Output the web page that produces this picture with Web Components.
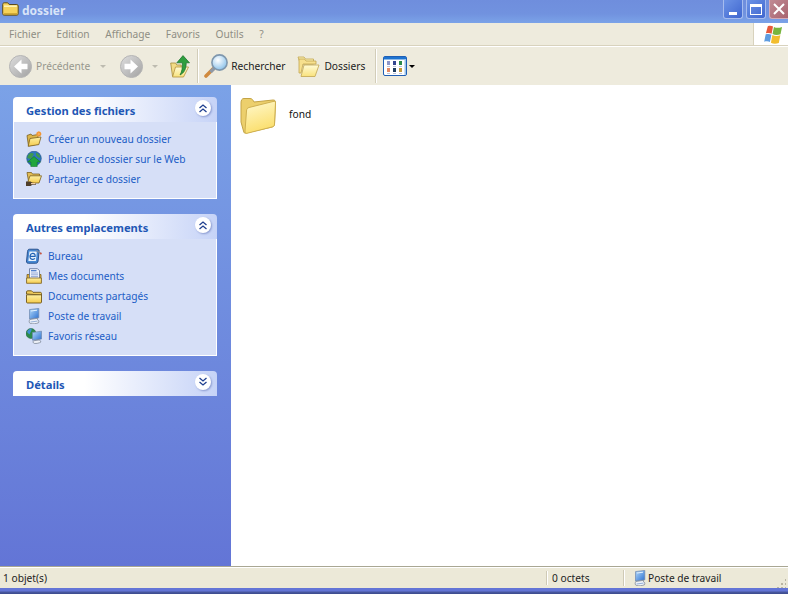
<!DOCTYPE html>
<html lang="fr">
<head>
<meta charset="utf-8">
<title>dossier</title>
<style>
  html,body{margin:0;height:100%;overflow:hidden}
  body{font:10.2px "Noto Sans","DejaVu Sans",sans-serif}
</style>
</head>
<body>
<xp-window>
  <xp-titlebar slot="title" label="dossier"></xp-titlebar>
  <xp-menubar slot="menu"></xp-menubar>
  <xp-toolbar slot="tools"></xp-toolbar>
  <xp-taskpane slot="side">
    <xp-taskbox label="Gestion des fichiers">
      <xp-tasklink icon="newfolder">Créer un nouveau dossier</xp-tasklink>
      <xp-tasklink icon="publish">Publier ce dossier sur le Web</xp-tasklink>
      <xp-tasklink icon="share">Partager ce dossier</xp-tasklink>
    </xp-taskbox>
    <xp-taskbox label="Autres emplacements">
      <xp-tasklink icon="desktop">Bureau</xp-tasklink>
      <xp-tasklink icon="mydocs">Mes documents</xp-tasklink>
      <xp-tasklink icon="shared">Documents partagés</xp-tasklink>
      <xp-tasklink icon="computer">Poste de travail</xp-tasklink>
      <xp-tasklink icon="network">Favoris réseau</xp-tasklink>
    </xp-taskbox>
    <xp-taskbox label="Détails" collapsed></xp-taskbox>
  </xp-taskpane>
  <xp-filelist slot="main"><xp-file label="fond"></xp-file></xp-filelist>
  <xp-statusbar slot="status"></xp-statusbar>
</xp-window>

<script>
// tous les dessins au meme endroit, xp-icon les pose dans son shadow root
const GRAD = {
  fold: '<linearGradient id="fold" x1="0" y1="0" x2="0" y2="1"><stop offset="0" stop-color="#fdf0a4"/><stop offset="1" stop-color="#f5cb4c"/></linearGradient>',
  pale: '<linearGradient id="pale" x1="0" y1="0" x2="0" y2="1"><stop offset="0" stop-color="#fffbd6"/><stop offset="1" stop-color="#f9e27c"/></linearGradient>',
  big: '<linearGradient id="big" x1="0" y1="0" x2=".3" y2="1"><stop offset="0" stop-color="#fff9cf"/><stop offset="1" stop-color="#fbdf6e"/></linearGradient>',
  back: '<linearGradient id="back" x1="0" y1="0" x2="1" y2="1"><stop offset="0" stop-color="#dedede"/><stop offset="1" stop-color="#a2a2a2"/></linearGradient>',
  lens: '<radialGradient id="lens" cx=".4" cy=".35" r=".7"><stop offset="0" stop-color="#ffffff"/><stop offset="1" stop-color="#86bfe9"/></radialGradient>',
  mon: '<linearGradient id="mon" x1="0" y1="0" x2="1" y2="1"><stop offset="0" stop-color="#b4dafa"/><stop offset="1" stop-color="#2a6fd0"/></linearGradient>'
};
const ICONS = {
  back:`<svg viewBox="0 0 23 23">${GRAD.back}<circle cx="11.500" cy="11.500" r="11" fill="url(#back)" stroke="#b4b4b4"/><path d="M12.500 4.500 5 11.500l7.500 7v-4.300h6V8.800h-6z" fill="#fff"/></svg>`,
  forward:`<svg viewBox="0 0 23 23">${GRAD.back}<circle cx="11.500" cy="11.500" r="11" fill="url(#back)" stroke="#b4b4b4"/><path d="M10.500 4.500l7.500 7-7.500 7v-4.300h-6V8.800h6z" fill="#fff"/></svg>`,
  up:`<svg viewBox="0 0 20 23">${GRAD.pale}<path d="M.7 8h5l1 2h4.500v11H2.500z" fill="#f3dc86" stroke="#a58a3a" stroke-width=".8"/><path d="M2.500 22 5.500 12h13l-5 10z" fill="url(#pale)" stroke="#b1913c" stroke-width=".8"/><path d="M13 .6l6.500 7.200h-3.300c0 6-1.800 10-6.200 12.200 2-3.500 2.500-7 2.400-12.200H6.800z" fill="#2f9e3f" stroke="#17702a" stroke-width=".7"/></svg>`,
  search:`<svg viewBox="0 0 24 24">${GRAD.lens}<path d="M9 15 2 22" stroke="#d08a3e" stroke-width="3.600" stroke-linecap="round"/><path d="M10 14.500 6.500 18" stroke="#8f99a6" stroke-width="3.400"/><circle cx="15.500" cy="8.500" r="7.600" fill="url(#lens)" stroke="#7f97ad" stroke-width="1.600"/></svg>`,
  folders:`<svg viewBox="0 0 23 21">${GRAD.pale}<path d="M1 1h6l1.500 2h8v5H3.500z" fill="#fbeeae" stroke="#c2a650" stroke-width=".8"/><path d="M2 3v14h2l2-9h13V5H9L7.500 3z" fill="#f7e08e" stroke="#c2a650" stroke-width=".8"/><path d="M4 20.500 7 9h15l-4 11.500z" fill="url(#pale)" stroke="#c2a650" stroke-width=".8"/></svg>`,
  views:`<svg viewBox="0 0 24 20"><rect x=".5" y=".5" width="23" height="19" rx="1.500" fill="#fff" stroke="#1f5fb5"/><rect x="1" y="1" width="22" height="2.500" fill="#1e74d0"/><rect x="21.500" y="3" width="1.500" height="16" fill="#9cc4ea"/><rect x="4" y="5" width="3" height="4" fill="#8d97c9"/><rect x="10" y="5" width="3" height="4" fill="#33458f"/><rect x="16" y="5" width="3" height="4" fill="#2c8a4a"/><rect x="4" y="12" width="3" height="4" fill="#e48a63"/><rect x="10" y="12" width="3" height="4" fill="#1f3d5e"/><rect x="16" y="12" width="3" height="4" fill="#c39a3d"/><rect x="4" y="10" width="3" height="1" fill="#bcc3da"/><rect x="10" y="10" width="3" height="1" fill="#bcc3da"/><rect x="16" y="10" width="3" height="1" fill="#bcc3da"/><rect x="4" y="17" width="3" height="1" fill="#bcc3da"/><rect x="10" y="17" width="3" height="1" fill="#bcc3da"/><rect x="16" y="17" width="3" height="1" fill="#bcc3da"/></svg>`,
  logo:`<svg viewBox="0 0 22 20"><path d="M5 1.200c2-.8 4-.5 5.500.3L9 9.300C7.500 8.300 5.500 8 3 8.800z" fill="#e8593a"/><path d="M11.500 2c2.500 1.200 5 1.200 8.500 0L18.400 9.800c-3 1.100-6 1-8.400-.2z" fill="#78b53e"/><path d="M2.800 9.800c2.500-.7 4.500-.5 6 .5L7.200 18c-1.500-1-3.500-1.100-6-.4z" fill="#5e9ce0"/><path d="M9.800 10.600c2.500 1.200 5.300 1.300 8.400.2L16.600 19c-3 1.100-6 1-8.300-.3z" fill="#f2bd2e"/></svg>`,
  titlefolder:`<svg viewBox="0 0 17 14"><path d="M.7 2.500c0-1 .6-1.700 1.500-1.700h3.500l1.500 1.700h7.600c.8 0 1.400.6 1.400 1.400v7.800c0 .8-.6 1.500-1.400 1.500H2.200c-.9 0-1.500-.7-1.500-1.500z" fill="#f6d25a" stroke="#5b4a1e"/><path d="M2 4.200h12.800" stroke="#fff6c2" stroke-width="1.400"/><path d="M2 12h13" stroke="#b98f22" stroke-width="1.200"/></svg>`,
  folderbig:`<svg viewBox="0 0 37 37">${GRAD.big}<path d="M1 6C1 3 2 1.500 4 1.500h6c2 0 3 1.500 4 3.500L33 3c2 0 2.500 1 2.500 2l-1 22c0 2-1.500 2.500-2.500 3L6 36c-1.500.5-2 0-2.500-2L1 25z" fill="#eccf6c" stroke="#c3a345"/><path d="M6.500 14c0-2 1-3 2.500-3.500l24-6c2-.5 2.500 0 2.500 1.500l-1 21c0 2-1 2.700-2.500 3L7 36.300c-1.500.3-2-.3-2-2.300z" fill="url(#big)" stroke="#cfb050"/></svg>`,
  newfolder:`<svg viewBox="0 0 16 16">${GRAD.fold}<path d="M1 4.500 5 3l1 1.500L12 3.500 12.500 13 2.500 15z" fill="#dcb548" stroke="#7c6120" stroke-width=".8"/><path d="M2.200 15.300 4 7.500 15 6 12.800 13.600z" fill="url(#fold)" stroke="#7c6120" stroke-width=".8"/><circle cx="12.800" cy="3" r="2.400" fill="#ee7f22"/><path d="M12.800 0v6M9.800 3h6M10.800 1l4 4M14.800 1l-4 4" stroke="#f7b65a" stroke-width=".7"/></svg>`,
  publish:`<svg viewBox="0 0 16 16"><circle cx="8" cy="7.500" r="7.300" fill="#2f76c0" stroke="#1e4d84" stroke-width=".6"/><path d="M3 3c2-1.500 4-1 5 0-1 1.500-2 2-1.500 3.500C5 8 3 8 1.200 7 1.500 5 2.300 4 3 3zM10 1.500c2 .5 4 2.500 4.500 5-1.500.5-3.500-.5-4.500-2.500z" fill="#3f9a4e"/><path d="M8 5.500l6.500 5.500h-3.300v4.500H4.800V11H1.500z" fill="#22a63c" stroke="#0f6b20" stroke-width=".5"/></svg>`,
  share:`<svg viewBox="0 0 16 16">${GRAD.fold}<path d="M1 1.500h4.500l1 1.500H13.500v7H2.500z" fill="#e3bd54" stroke="#7c6120" stroke-width=".8"/><path d="M1.500 12 4 4.800h11.500L13 12z" fill="url(#fold)" stroke="#7c6120" stroke-width=".8"/><path d="M0 10.500h4.500l2 1.300 3.500.5v1.500H6.500l-2 1.200H0z" fill="#4f3f2c"/><path d="M5 12h4.500v1.200H5z" fill="#f3cfa6"/></svg>`,
  desktop:`<svg viewBox="0 0 16 16"><path d="M3.500 1.200h7.500c1.500 0 2.300.8 2.100 2.300l-1 9.500c-.2 1.500-1 2.300-2.500 2.300H2.500C1 15.300.3 14.500.5 13l1-9.500c.1-1.500 .8-2.300 2-2.300z" fill="#4788d2" stroke="#173f7c" stroke-width=".8"/><path d="M3.400 3.600h7.400L9.900 13H2.400z" fill="#e8f2fc"/><path d="M4.300 8.300h4.800c.3-2-1-3.100-2.500-2.900C5 5.600 4 7 4 8.800c0 1.800 1.300 2.800 3 2.500.9-.1 1.500-.5 2-1" fill="none" stroke="#1f62b4" stroke-width="1.200"/><path d="M10 2.500l5 3" stroke="#7f8a9c" stroke-width="1.200"/><circle cx="14.800" cy="5.500" r="1" fill="#c95440"/></svg>`,
  mydocs:`<svg viewBox="0 0 16 16">${GRAD.fold}<path d="M1 6.500h14v8H1z" fill="#dcae3c" stroke="#7c6120" stroke-width=".8"/><path d="M3.500 .7h8l2 2V11h-10z" fill="#eef3fc" stroke="#5c6f95" stroke-width=".8"/><path d="M5 2.700h5.500" stroke="#3f74c8" stroke-width="1.200"/><path d="M5 5h7M5 6.800h7M5 8.600h7" stroke="#7d97cf" stroke-width=".8"/><path d="M.6 10h14.800v5.300H.6z" fill="url(#fold)" stroke="#7c6120" stroke-width=".8"/></svg>`,
  shared:`<svg viewBox="0 0 16 16">${GRAD.fold}<path d="M.5 6V4c0-.7.5-1.200 1.200-1.200h3.800L7 4.300h7.300c.7 0 1.200.5 1.200 1.200V7z" fill="#eeca5c" stroke="#6e5518" stroke-width=".9"/><path d="M.5 6.800h15v7.200c0 .6-.4 1-1 1h-13c-.6 0-1-.4-1-1z" fill="url(#fold)" stroke="#6e5518" stroke-width=".9"/></svg>`,
  computer:`<svg viewBox="0 0 16 16">${GRAD.mon}<path d="M3.500 1.600 12.800.4v9.400L3.500 11z" fill="url(#mon)" stroke="#6d87ad" stroke-width=".7"/><path d="M5 3 11 2.200" stroke="#e2f1ff" stroke-width="1"/><path d="M3.800 11.500l7.700-1.200v1.400c1.200.5 1.700 1.700 1 3-2.500 1.200-6 1.500-8.300.7-1.300-.6-1.300-2.400-.4-3.900z" fill="#eef1f7" stroke="#6f7a8c" stroke-width=".7"/><path d="M4.500 14l7-.9" stroke="#7f9fd0" stroke-width=".8"/></svg>`,
  network:`<svg viewBox="0 0 16 16">${GRAD.mon}<circle cx="5" cy="5.500" r="5" fill="#2c8a4a" stroke="#1c5f3a" stroke-width=".5"/><path d="M1 4c1-2 3-3.500 4.500-3.500.5 2-1 3.500-2 6z" fill="#3f8fd6"/><path d="M6.500 4.500 15.500 3.200v7.800l-9 1.200z" fill="url(#mon)" stroke="#6d87ad" stroke-width=".7"/><path d="M7.500 12.800l6-.9 1.500 2c-1.800 1.300-4.500 1.800-6.800 1.500-1.200-.4-1.400-1.700-.7-2.600z" fill="#eef1f7" stroke="#6f7a8c" stroke-width=".7"/></svg>`
};

class XpIcon extends HTMLElement{
  connectedCallback(){
    const w=this.getAttribute('w')||16, h=this.getAttribute('h')||w;
    this.attachShadow({mode:'open'}).innerHTML=`
      <style>:host{display:block;flex:none;width:${w}px;height:${h}px} svg{display:block;width:100%;height:100%}</style>
      ${ICONS[this.getAttribute('name')]||''}`;
  }
}
customElements.define('xp-icon',XpIcon);

class XpWindow extends HTMLElement{
  constructor(){
    super();
    this.attachShadow({mode:'open'}).innerHTML=`
      <style>
        :host{display:flex;flex-direction:column;width:788px;height:594px;background:#ece9d8;color:#000}
        .body{flex:1;min-height:0;display:flex}
        .foot{height:6px;background:linear-gradient(#6375d6 0,#6375d6 3px,#49589f 4px,#3b4a8c 6px)}
        ::slotted([slot=main]){flex:1}
      </style>
      <slot name="title"></slot>
      <slot name="menu"></slot>
      <slot name="tools"></slot>
      <div class="body"><slot name="side"></slot><slot name="main"></slot></div>
      <slot name="status"></slot>
      <div class="foot"></div>`;
  }
}
customElements.define('xp-window',XpWindow);

class XpTitlebar extends HTMLElement{
  connectedCallback(){
    this.attachShadow({mode:'open'}).innerHTML=`
      <style>
        :host{display:flex;align-items:flex-start;height:23px;background:linear-gradient(#6f8edd,#7192df 60%,#7ba3e8)}
        .ic{margin:2px 0 0 2px}
        .t{margin:2px 0 0 3px;font:bold 12px/17px "Noto Sans","DejaVu Sans",sans-serif;color:#d8e4f8}
        .btns{margin-left:auto;display:flex;gap:3px}
        .b{box-sizing:border-box;width:20px;height:19px;border:1px solid #a6bcee;border-top:0;border-radius:0 0 3px 3px;background:linear-gradient(135deg,#6c93e6,#3f66cf);position:relative;display:flex;align-items:center;justify-content:center}
        .min i{position:absolute;left:5px;bottom:3px;width:8px;height:3px;background:#fff}
        .max i{display:block;width:12px;height:11px;box-sizing:border-box;border:1px solid #fff;border-top-width:3px}
        .close{background:linear-gradient(135deg,#c08a94,#a9646f);border-right:0;border-radius:0 0 0 3px;width:19px;border-color:#d3aab6}
        .close svg{width:12px;height:12px}
      </style>
      <xp-icon class="ic" name="titlefolder" w="17" h="14"></xp-icon>
      <span class="t">${this.getAttribute('label')}</span>
      <div class="btns">
        <div class="b min"><i></i></div>
        <div class="b max"><i></i></div>
        <div class="b close"><svg viewBox="0 0 12 12"><path d="M1 1l10 10M11 1 1 11" stroke="#fff" stroke-width="2"/></svg></div>
      </div>`;
  }
}
customElements.define('xp-titlebar',XpTitlebar);

class XpMenubar extends HTMLElement{
  connectedCallback(){
    const items=['Fichier','Edition','Affichage','Favoris','Outils','?'];
    this.attachShadow({mode:'open'}).innerHTML=`
      <style>
        :host{display:flex;align-items:center;height:22px;background:#eeebdd;border-bottom:1px solid #d8d2bd;box-shadow:0 1px 0 #fff}
        .items{display:flex;gap:15.600px;padding-left:9px;color:#8e8e84}
        .logo{margin-left:auto;align-self:stretch;box-sizing:border-box;width:35px;padding-left:9px;background:#fff;border-left:1px solid #d8d2bd;display:flex;align-items:center}
      </style>
      <div class="items">${items.map(i=>`<span>${i}</span>`).join('')}</div>
      <div class="logo"><xp-icon name="logo" w="21" h="19"></xp-icon></div>`;
  }
}
customElements.define('xp-menubar',XpMenubar);

class XpToolbar extends HTMLElement{
  connectedCallback(){
    this.attachShadow({mode:'open'}).innerHTML=`
      <style>
        :host{display:flex;align-items:center;height:38px;margin-top:1px;background:#eeebdd;color:#222}
        .dim{color:#97978d}
        .caret{width:0;height:0;border:3px solid transparent;border-top:3px solid #bdbbb0;border-bottom:0}
        .dark{border-top:3px solid #000}
        .sep{width:1px;height:34px;background:#d2cdb9;box-shadow:1px 0 0 #fff}
      </style>
      <xp-icon name="back" w="23" style="margin-left:9px"></xp-icon>
      <span class="dim" style="margin-left:4px">Précédente</span>
      <i class="caret" style="margin-left:10px"></i>
      <xp-icon name="forward" w="23" style="margin-left:14px"></xp-icon>
      <i class="caret" style="margin-left:9px"></i>
      <xp-icon name="up" w="20" h="23" style="margin-left:12px"></xp-icon>
      <i class="sep" style="margin-left:7px"></i>
      <xp-icon name="search" w="24" style="margin-left:6px"></xp-icon>
      <span style="margin-left:3px">Rechercher</span>
      <xp-icon name="folders" w="23" h="21" style="margin-left:12px"></xp-icon>
      <span style="margin-left:4px">Dossiers</span>
      <i class="sep" style="margin-left:10px"></i>
      <xp-icon name="views" w="24" h="20" style="margin-left:7px"></xp-icon>
      <i class="caret dark" style="margin-left:2px"></i>`;
  }
}
customElements.define('xp-toolbar',XpToolbar);

class XpTaskpane extends HTMLElement{
  constructor(){
    super();
    this.attachShadow({mode:'open'}).innerHTML=`
      <style>
        :host{display:flex;flex-direction:column;gap:15px;box-sizing:border-box;flex:none;width:231px;padding:12px 14px 0 13px;background:linear-gradient(#7ba2e7,#6375d6)}
      </style>
      <slot></slot>`;
  }
}
customElements.define('xp-taskpane',XpTaskpane);

class XpTaskbox extends HTMLElement{
  connectedCallback(){
    const col=this.hasAttribute('collapsed');
    const chev=col?'M4.500 4l3.500 3 3.500-3M4.500 8l3.500 3 3.500-3':'M4.500 8l3.500-3 3.500 3M4.500 12l3.500-3 3.500 3';
    this.attachShadow({mode:'open'}).innerHTML=`
      <style>
        :host{display:block}
        .head{display:flex;align-items:center;height:25px;box-sizing:border-box;padding:0 6px 0 13px;border-radius:4px 4px 0 0;background:linear-gradient(90deg,#fff 35%,#c6d3f7)}
        .label{font-weight:bold;font-size:11.200px;color:#2257b5;margin-top:1px}
        .chev{margin:0 0 3px auto;width:16px;height:16px;border-radius:50%;background:#fff;box-shadow:1px 1px 2px #8a9ad0}
        .chev svg{display:block}
        .list{display:flex;flex-direction:column;gap:4px;padding:9px 0 11px 12px;background:#d6dff7;border:1px solid #fff;border-top:0}
        :host([collapsed]) .list{display:none}
      </style>
      <div class="head">
        <span class="label">${this.getAttribute('label')}</span>
        <div class="chev"><svg width="16" height="16" viewBox="0 0 16 16"><path d="${chev}" fill="none" stroke="#1f3f8f" stroke-width="1.300"/></svg></div>
      </div>
      <div class="list"><slot></slot></div>`;
  }
}
customElements.define('xp-taskbox',XpTaskbox);

class XpTasklink extends HTMLElement{
  connectedCallback(){
    this.attachShadow({mode:'open'}).innerHTML=`
      <style>
        :host{display:flex;align-items:center;gap:6px;height:16px;color:#215dc6;white-space:nowrap}
      </style>
      <xp-icon name="${this.getAttribute('icon')}"></xp-icon>
      <span><slot></slot></span>`;
  }
}
customElements.define('xp-tasklink',XpTasklink);

class XpFilelist extends HTMLElement{
  constructor(){
    super();
    this.attachShadow({mode:'open'}).innerHTML=`
      <style>:host{display:block;background:#fff;padding:12px 0 0 9px}</style>
      <slot></slot>`;
  }
}
customElements.define('xp-filelist',XpFilelist);

class XpFile extends HTMLElement{
  connectedCallback(){
    this.attachShadow({mode:'open'}).innerHTML=`
      <style>
        :host{display:flex;align-items:flex-start;gap:12px;color:#111}
        span{margin-top:10px}
      </style>
      <xp-icon name="folderbig" w="37"></xp-icon>
      <span>${this.getAttribute('label')}</span>`;
  }
}
customElements.define('xp-file',XpFile);

class XpStatusbar extends HTMLElement{
  connectedCallback(){
    this.attachShadow({mode:'open'}).innerHTML=`
      <style>
        :host{display:flex;align-items:center;height:21px;background:#ece9d8;border-top:1px solid #a9a793;box-shadow:inset 0 1px 0 #fff;color:#222}
        .a{width:546px;padding-left:3px;box-sizing:border-box}
        .b{width:77px;box-sizing:border-box;padding-left:5px;border-left:1px solid #cfcab6;box-shadow:inset 1px 0 0 #fff}
        .c{display:flex;align-items:center;padding-left:8px;flex:1;border-left:1px solid #cfcab6;box-shadow:inset 1px 0 0 #fff}
        .grip{width:10px;height:10px;align-self:flex-end;margin-right:2px;background:radial-gradient(circle,#b9b5a3 1px,transparent 1.200px) 0 0/4px 4px;clip-path:polygon(100% 0,100% 100%,0 100%)}
      </style>
      <div class="a">1 objet(s)</div>
      <div class="b">0 octets</div>
      <div class="c"><xp-icon name="computer"></xp-icon>Poste de travail</div>
      <div class="grip"></div>`;
  }
}
customElements.define('xp-statusbar',XpStatusbar);
</script>
</body>
</html>
